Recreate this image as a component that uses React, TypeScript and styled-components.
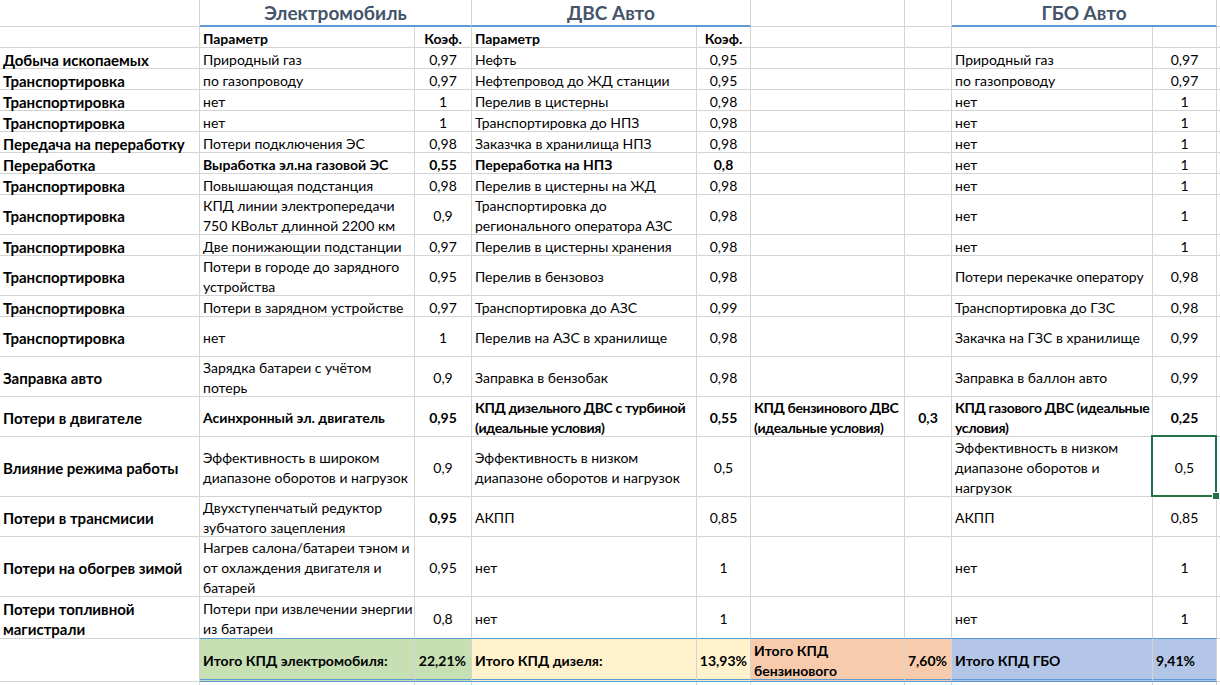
import React from "react";
import styled, { createGlobalStyle, css } from "styled-components";

const GlobalStyle = createGlobalStyle`
  html, body { margin: 0; padding: 0; background: #ffffff; }
  body { font-family: Lato, "Noto Sans", Arial, sans-serif; color: #000; }
  * { box-sizing: border-box; }
`;

const GRID = "#d4d4d4";
const ACCENT = "#5b9bd5";

type Fill = "green" | "yellow" | "peach" | "blue";
const fills: Record<Fill, string> = {
  green: "#c6e0b4",
  yellow: "#fff2cc",
  peach: "#f8cbad",
  blue: "#b4c6e7",
};

type CellData = {
  t?: string;
  b?: boolean;
  a?: "l" | "c" | "r";
  span?: number;
  title?: boolean;
  underline?: boolean;
  fill?: Fill;
  total?: boolean;
  pr?: number;
  selected?: boolean;
  label?: boolean;
  tight?: boolean;
};

type RowData = { h: number; total?: boolean; cells: CellData[] };

const Sheet = styled.div`
  width: 1220px;
  height: 685px;
  overflow: hidden;
  display: flex;
  flex-direction: column;
`;

const Row = styled.div<{ $h: number; $total?: boolean }>`
  display: grid;
  grid-template-columns: 200px 215px 57px 225px 54px 154px 47px 201px 64px 1fr;
  grid-template-rows: ${(p) => (p.$total ? p.$h + 1 : p.$h)}px;
  height: ${(p) => (p.$total ? p.$h + 1 : p.$h)}px;
  flex: none;
  ${(p) =>
    p.$total &&
    css`
      margin-top: -1px;
    `}
`;

const Cell = styled.div<{
  $b?: boolean;
  $a?: "l" | "c" | "r";
  $span?: number;
  $title?: boolean;
  $underline?: boolean;
  $fill?: Fill;
  $total?: boolean;
  $pr?: number;
  $selected?: boolean;
  $label?: boolean;
  $tight?: boolean;
}>`
  grid-column: span ${(p) => p.$span ?? 1};
  min-height: 0;
  display: flex;
  align-items: center;
  justify-content: ${(p) =>
    p.$a === "c" ? "center" : p.$a === "r" ? "flex-end" : "flex-start"};
  text-align: ${(p) => (p.$a === "c" ? "center" : p.$a === "r" ? "right" : "left")};
  padding: 3px ${(p) => p.$pr ?? 3}px 0 3px;
  border-right: 1px solid ${GRID};
  border-bottom: 1px solid ${GRID};
  font-size: ${(p) => (p.$label ? 15 : 14)}px;
  line-height: 20px;
  font-weight: ${(p) => (p.$b ? 700 : 400)};
  letter-spacing: ${(p) => (p.$tight ? "-0.35px" : "normal")};
  white-space: pre;
  position: relative;
  background: ${(p) => (p.$fill ? fills[p.$fill] : "transparent")};

  ${(p) =>
    p.$title &&
    css`
      font-size: 19px;
      font-weight: 700;
      color: #44546a;
      padding-top: 1px;
    `}

  ${(p) =>
    p.$underline &&
    css`
      border-bottom: 2px solid ${ACCENT};
    `}

  ${(p) =>
    p.$total &&
    css`
      border-top: 1px solid ${ACCENT};
      border-bottom: 3px double ${ACCENT};
      padding-top: 4px;
    `}

  ${(p) =>
    p.$selected &&
    css`
      &::before {
        content: "";
        position: absolute;
        top: -2px;
        left: -2px;
        right: -1px;
        bottom: -1px;
        border: 2px solid #217346;
        z-index: 2;
        pointer-events: none;
      }
      &::after {
        content: "";
        position: absolute;
        right: -4px;
        bottom: -4px;
        width: 6px;
        height: 6px;
        background: #217346;
        border: 1px solid #ffffff;
        z-index: 3;
      }
    `}
`;

const E: CellData = {};
const n = (t: string, b?: boolean): CellData => ({ t, a: "c", b });
const l = (t: string, b?: boolean): CellData => ({ t, b });
const lab = (t: string): CellData => ({ t, b: true, label: true });

const body = (
  h: number,
  label: string,
  e1: string,
  k1: string,
  d1: string,
  k2: string,
  g1: string,
  k4: string,
  opts: { eb?: boolean; kb1?: boolean; db?: boolean; kb2?: boolean; sel?: boolean } = {}
): RowData => ({
  h,
  cells: [
    lab(label),
    l(e1, opts.eb),
    n(k1, opts.kb1),
    l(d1, opts.db),
    n(k2, opts.kb2),
    E,
    E,
    l(g1),
    { ...n(k4), selected: opts.sel },
    E,
  ],
});

const rows: RowData[] = [
  {
    h: 27,
    cells: [
      E,
      { t: "Электромобиль", a: "c", span: 2, title: true, underline: true },
      { t: "ДВС Авто", a: "c", span: 2, title: true, underline: true },
      E,
      E,
      { t: "ГБО Авто", a: "c", span: 2, title: true, underline: true },
      E,
    ],
  },
  {
    h: 21,
    cells: [E, l("Параметр", true), n("Коэф.", true), l("Параметр", true), n("Коэф.", true), E, E, E, E, E],
  },
  body(21, "Добыча ископаемых", "Природный газ", "0,97", "Нефть", "0,95", "Природный газ", "0,97"),
  body(21, "Транспортировка", "по газопроводу", "0,97", "Нефтепровод до ЖД станции", "0,95", "по газопроводу", "0,97"),
  body(21, "Транспортировка", "нет", "1", "Перелив в цистерны", "0,98", "нет", "1"),
  body(21, "Транспортировка", "нет", "1", "Транспортировка до НПЗ", "0,98", "нет", "1"),
  body(21, "Передача на переработку", "Потери подключения ЭС", "0,98", "Заказчка в хранилища НПЗ", "0,98", "нет", "1"),
  body(21, "Переработка", "Выработка эл.на газовой ЭС", "0,55", "Переработка на НПЗ", "0,8", "нет", "1", {
    eb: true,
    kb1: true,
    db: true,
    kb2: true,
  }),
  body(21, "Транспортировка", "Повышающая подстанция", "0,98", "Перелив в цистерны на ЖД", "0,98", "нет", "1"),
  body(
    40,
    "Транспортировка",
    "КПД линии электропередачи\n750 КВольт длинной 2200 км",
    "0,9",
    "Транспортировка до\nрегионального оператора АЗС",
    "0,98",
    "нет",
    "1"
  ),
  body(21, "Транспортировка", "Две понижающии подстанции", "0,97", "Перелив в цистерны хранения", "0,98", "нет", "1"),
  body(
    40,
    "Транспортировка",
    "Потери в городе до зарядного\nустройства",
    "0,95",
    "Перелив в бензовоз",
    "0,98",
    "Потери перекачке оператору",
    "0,98"
  ),
  body(21, "Транспортировка", "Потери в зарядном устройстве", "0,97", "Транспортировка до АЗС", "0,99", "Транспортировка до ГЗС", "0,98"),
  body(40, "Транспортировка", "нет", "1", "Перелив на АЗС в хранилище", "0,98", "Закачка на ГЗС в хранилище", "0,99"),
  body(40, "Заправка авто", "Зарядка батареи с учётом\nпотерь", "0,9", "Заправка в бензобак", "0,98", "Заправка в баллон авто", "0,99"),
  {
    h: 40,
    cells: [
      lab("Потери в двигателе"),
      l("Асинхронный эл. двигатель", true),
      n("0,95", true),
      { ...l("КПД дизельного ДВС с турбиной\n(идеальные условия)", true), tight: true },
      n("0,55", true),
      { ...l("КПД бензинового ДВС\n(идеальные условия)", true), tight: true },
      n("0,3", true),
      { ...l("КПД газового ДВС (идеальные\nусловия)", true), tight: true },
      n("0,25", true),
      E,
    ],
  },
  body(
    60,
    "Влияние режима работы",
    "Эффективность в широком\nдиапазоне оборотов и нагрузок",
    "0,9",
    "Эффективность в низком\nдиапазоне оборотов и нагрузок",
    "0,5",
    "Эффективность в низком\nдиапазоне оборотов и\nнагрузок",
    "0,5",
    { sel: true }
  ),
  body(40, "Потери в трансмисии", "Двухступенчатый редуктор\nзубчатого зацепления", "0,95", "АКПП", "0,85", "АКПП", "0,85", {
    kb1: true,
  }),
  body(
    60,
    "Потери на обогрев зимой",
    "Нагрев салона/батареи тэном и\nот охлаждения двигателя и\nбатарей",
    "0,95",
    "нет",
    "1",
    "нет",
    "1"
  ),
  body(42, "Потери топливной\nмагистрали", "Потери при извлечении энергии\nиз батареи", "0,8", "нет", "1", "нет", "1"),
  {
    h: 43,
    total: true,
    cells: [
      E,
      { t: "Итого КПД электромобиля:", b: true, fill: "green", total: true },
      { t: "22,21%", b: true, a: "r", fill: "green", total: true, pr: 5 },
      { t: "Итого КПД дизеля:", b: true, fill: "yellow", total: true },
      { t: "13,93%", b: true, a: "r", fill: "yellow", total: true, pr: 3 },
      { t: "Итого КПД\nбензинового", b: true, fill: "peach", total: true },
      { t: "7,60%", b: true, a: "r", fill: "peach", total: true, pr: 4 },
      { t: "Итого КПД ГБО", b: true, fill: "blue", total: true },
      { t: "9,41%", b: true, a: "r", fill: "blue", total: true, pr: 21 },
      E,
    ],
  },
  { h: 21, cells: [E, E, E, E, E, E, E, E, E, E] },
];

export default function App() {
  return (
    <>
      <GlobalStyle />
      <Sheet>
        {rows.map((r, i) => (
          <Row key={i} $h={r.h} $total={r.total}>
            {r.cells.map((c, j) => (
              <Cell
                key={j}
                $b={c.b}
                $a={c.a}
                $span={c.span}
                $title={c.title}
                $underline={c.underline}
                $fill={c.fill}
                $total={c.total}
                $pr={c.pr}
                $selected={c.selected}
                $label={c.label}
                $tight={c.tight}
              >
                {c.t}
              </Cell>
            ))}
          </Row>
        ))}
      </Sheet>
    </>
  );
}
